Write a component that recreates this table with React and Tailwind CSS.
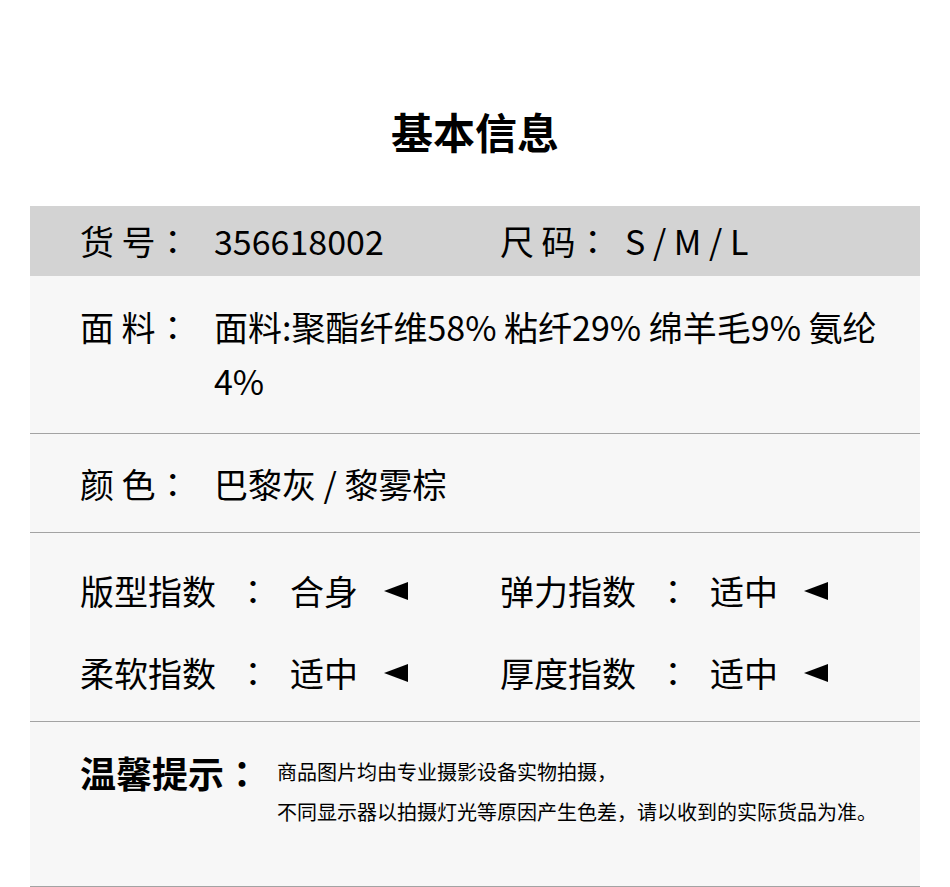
import React from "react";

const font = { fontFamily: '"Noto Sans CJK SC", "Noto Sans", sans-serif' };

// centred full-width colon, as in the picture
const Colon = () => (
  <span style={{ fontFamily: '"Noto Sans CJK TC", "Noto Sans CJK SC", sans-serif' }}>：</span>
);

const Arrow = () => (
  <svg width="24" height="18" viewBox="0 0 24 18" className="inline-block">
    <polygon points="0,9 24,0 24,18" fill="#000" />
  </svg>
);

const IndexItem = ({ label, value }) => (
  <div className="flex items-center w-[420px] h-[34px] leading-[34px]">
    <span className="w-[156px]">{label}</span>
    <span className="w-[54px]"><Colon /></span>
    <span className="w-[94px]">{value}</span>
    <Arrow />
  </div>
);

export default function App() {
  return (
    <div className="bg-white w-[950px] h-[887px] text-black" style={font}>
      <h1 className="pt-[110px] h-[206px] text-center text-[42px] leading-[42px] font-bold">
        基本信息
      </h1>

      <div className="mx-[30px]">
        <div className="flex items-center h-[70px] bg-[#d3d3d3] pl-[50px] text-[34px] leading-[34px]">
          <span className="w-[134px]">货 号<Colon /></span>
          <span className="w-[286px]">356618002</span>
          <span className="w-[125px]">尺 码<Colon /></span>
          <span>S / M / L</span>
        </div>

        <div className="flex bg-[#f7f7f7] pl-[50px] pt-[24px] pb-[25px] border-b border-[#a3a3a3] text-[34px] leading-[54px]">
          <span className="w-[134px] shrink-0">面 料<Colon /></span>
          <span className="w-[670px]">面料:聚酯纤维58% 粘纤29% 绵羊毛9% 氨纶4%</span>
        </div>

        <div className="flex items-center h-[99px] bg-[#f7f7f7] pl-[50px] border-b border-[#a3a3a3] text-[34px]">
          <span className="w-[134px]">颜 色<Colon /></span>
          <span>巴黎灰 / 黎雾棕</span>
        </div>

        <div className="flex flex-col gap-[48px] bg-[#f7f7f7] pl-[50px] pt-[41px] pb-[31px] border-b border-[#a3a3a3] text-[34px]">
          <div className="flex">
            <IndexItem label="版型指数" value="合身" />
            <IndexItem label="弹力指数" value="适中" />
          </div>
          <div className="flex">
            <IndexItem label="柔软指数" value="适中" />
            <IndexItem label="厚度指数" value="适中" />
          </div>
        </div>

        <div className="flex items-start h-[165px] bg-[#f7f7f7] pl-[50px] pt-[32px] border-b border-[#a3a3a3]">
          <span className="w-[197px] text-[36px] leading-[36px] font-bold">温馨提示<Colon /></span>
          <div className="text-[20px] leading-[40px] -mt-[2px]">
            <p>商品图片均由专业摄影设备实物拍摄，</p>
            <p>不同显示器以拍摄灯光等原因产生色差，请以收到的实际货品为准。</p>
          </div>
        </div>
      </div>
    </div>
  );
}
